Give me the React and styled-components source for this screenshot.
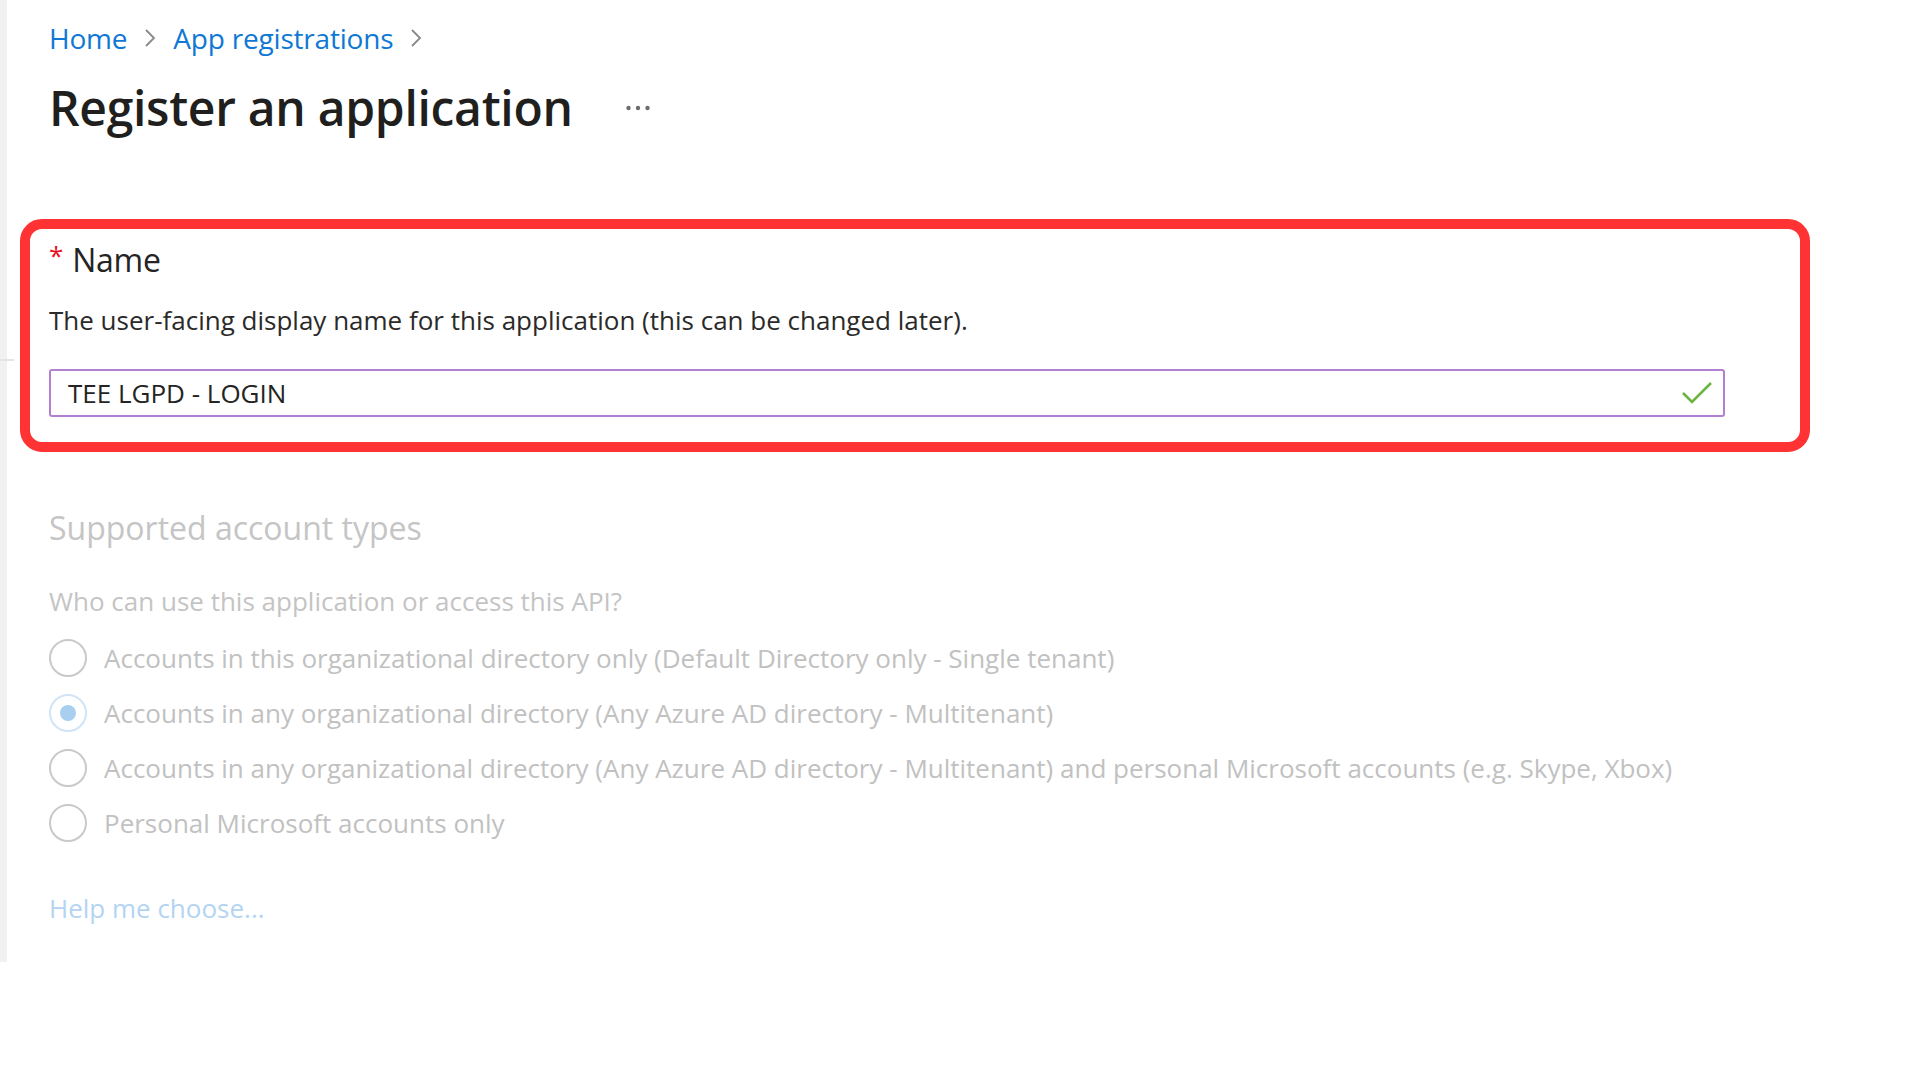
import React from "react";
import styled, { createGlobalStyle } from "styled-components";

const GlobalStyle = createGlobalStyle`
  html, body { margin: 0; padding: 0; background: #ffffff; }
  body { font-family: "Open Sans", "Noto Sans", Arial, sans-serif; color: #323130; }
  * { box-sizing: border-box; }
`;

const Page = styled.div`
  display: flex;
  align-items: flex-start;
  width: 1920px;
  height: 1080px;
  overflow: hidden;
  background: #fff;
`;

const SideEdge = styled.div`
  position: relative;
  flex: 0 0 7px;
  height: 962px;
  background: #f1f1f1;
  &::after {
    content: "";
    position: absolute;
    left: 0;
    top: 359px;
    width: 14px;
    height: 2px;
    background: #e4e4e4;
  }
`;

const Content = styled.main`
  display: flex;
  flex-direction: column;
  padding: 20px 0 0 42px;
`;

const Breadcrumb = styled.nav`
  display: flex;
  align-items: center;
  gap: 17px;
  height: 36px;
  font-size: 28px;
`;

const Crumb = styled.a`
  color: #0f78d4;
  text-decoration: none;
  letter-spacing: -0.2px;
`;

const TitleRow = styled.div`
  display: flex;
  align-items: center;
  gap: 53px;
  margin-top: 22px;
  height: 60px;
`;

const Title = styled.h1`
  margin: 0;
  font-size: 48px;
  font-weight: 600;
  color: #201f1e;
  letter-spacing: -0.3px;
  line-height: 60px;
`;

const Highlight = styled.section`
  margin-top: 81px;
  margin-left: -29px;
  width: 1790px;
  border: 10px solid #ff3333;
  border-radius: 22px;
  padding: 10px 75px 25px 19px;
`;

const LabelRow = styled.div`
  display: flex;
  align-items: center;
  height: 40px;
  gap: 9px;
`;

const Required = styled.span`
  color: #e81123;
  font-size: 26px;
  line-height: 1;
  margin-top: -8px;
`;

const Label = styled.label`
  font-size: 32px;
  color: #252423;
  letter-spacing: -0.3px;
`;

const Description = styled.p`
  margin: 24px 0 0;
  font-size: 26px;
  line-height: 34px;
  color: #2b2a29;
`;

const InputBox = styled.div`
  display: flex;
  align-items: center;
  justify-content: space-between;
  margin-top: 32px;
  height: 48px;
  border: 2px solid #b280d0;
  border-radius: 3px;
  padding: 0 10px 0 17px;
`;

const InputText = styled.span`
  font-size: 26px;
  color: #252423;
`;

const Faded = styled.div`
  display: flex;
  flex-direction: column;
`;

const SectionTitle = styled.h2`
  margin: 56px 0 0;
  font-size: 32px;
  font-weight: 400;
  line-height: 40px;
  color: #c5c5c5;
`;

const Question = styled.p`
  margin: 36px 0 0;
  font-size: 26px;
  line-height: 34px;
  color: #c4c4c4;
`;

const RadioList = styled.div`
  display: flex;
  flex-direction: column;
  gap: 17px;
  margin-top: 21px;
`;

const RadioRow = styled.div`
  display: flex;
  align-items: center;
  gap: 17px;
  height: 38px;
`;

const RadioCircle = styled.span`
  flex: 0 0 38px;
  width: 38px;
  height: 38px;
  border-radius: 50%;
  border: 2px solid ${(p) => (p.$checked ? "#cfe4f7" : "#c9c9c9")};
  display: flex;
  align-items: center;
  justify-content: center;
  &::after {
    content: "";
    display: ${(p) => (p.$checked ? "block" : "none")};
    width: 16px;
    height: 16px;
    border-radius: 50%;
    background: #a8cff0;
  }
`;

const RadioLabel = styled.span`
  font-size: 26px;
  color: #c1c1c1;
`;

const HelpLink = styled.a`
  margin-top: 49px;
  font-size: 26px;
  line-height: 34px;
  color: #b3d4f2;
  text-decoration: none;
`;

const Chevron = () => (
  <svg width="12" height="20" viewBox="0 0 12 20" fill="none">
    <path d="M2 2 L10 10 L2 18" stroke="#8a8886" strokeWidth="1.8" />
  </svg>
);

const Ellipsis = () => (
  <svg width="24" height="6" viewBox="0 0 24 6">
    <circle cx="2.5" cy="3" r="2.2" fill="#6d6d6d" />
    <circle cx="12" cy="3" r="2.2" fill="#6d6d6d" />
    <circle cx="21.5" cy="3" r="2.2" fill="#6d6d6d" />
  </svg>
);

const Check = () => (
  <svg width="32" height="24" viewBox="0 0 32 24" fill="none">
    <path d="M2 12 L11 21 L30 2" stroke="#6cb33f" strokeWidth="2.6" />
  </svg>
);

const options = [
  { label: "Accounts in this organizational directory only (Default Directory only - Single tenant)", checked: false },
  { label: "Accounts in any organizational directory (Any Azure AD directory - Multitenant)", checked: true },
  { label: "Accounts in any organizational directory (Any Azure AD directory - Multitenant) and personal Microsoft accounts (e.g. Skype, Xbox)", checked: false },
  { label: "Personal Microsoft accounts only", checked: false },
];

export default function App() {
  return (
    <>
      <GlobalStyle />
      <Page>
        <SideEdge />
        <Content>
          <Breadcrumb>
            <Crumb href="#">Home</Crumb>
            <Chevron />
            <Crumb href="#">App registrations</Crumb>
            <Chevron />
          </Breadcrumb>
          <TitleRow>
            <Title>Register an application</Title>
            <Ellipsis />
          </TitleRow>
          <Highlight>
            <LabelRow>
              <Required>*</Required>
              <Label>Name</Label>
            </LabelRow>
            <Description>
              The user-facing display name for this application (this can be changed later).
            </Description>
            <InputBox>
              <InputText>TEE LGPD - LOGIN</InputText>
              <Check />
            </InputBox>
          </Highlight>
          <Faded>
            <SectionTitle>Supported account types</SectionTitle>
            <Question>Who can use this application or access this API?</Question>
            <RadioList>
              {options.map((o) => (
                <RadioRow key={o.label}>
                  <RadioCircle $checked={o.checked} />
                  <RadioLabel>{o.label}</RadioLabel>
                </RadioRow>
              ))}
            </RadioList>
            <HelpLink href="#">Help me choose...</HelpLink>
          </Faded>
        </Content>
      </Page>
    </>
  );
}
